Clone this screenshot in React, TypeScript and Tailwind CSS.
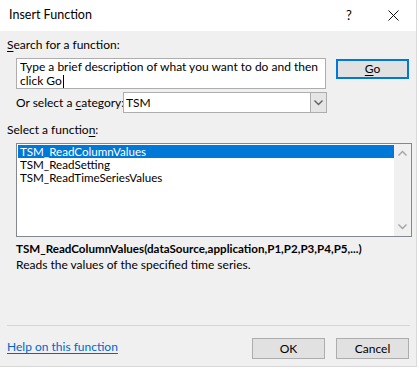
import React from 'react';

const font = { fontFamily: 'Lato, "Noto Sans", sans-serif' };

function Chevron({ up = false, className = '' }: { up?: boolean; className?: string }) {
  return (
    <svg width="9" height="6" viewBox="0 0 9 6" className={className}>
      <polyline
        points={up ? '0.5,5.5 4.5,1.5 8.5,5.5' : '0.5,0.5 4.5,4.5 8.5,0.5'}
        fill="none"
        stroke="currentColor"
        strokeWidth="1.4"
      />
    </svg>
  );
}

export default function App() {
  const functions = ['TSM_ReadColumnValues', 'TSM_ReadSetting', 'TSM_ReadTimeSeriesValues'];

  return (
    <div className="w-[419px] h-[369px] bg-white text-[12px] text-black" style={font}>
      <div className="w-[417px] h-[367px] flex flex-col bg-[#f0f0f0] border-r border-b border-[#d9d9d9]">
        {/* Title bar */}
        <div className="h-[31px] bg-white flex items-center pl-[9px] shrink-0">
          <span className="flex-1 text-[12.5px] leading-none">Insert Function</span>
          <span className="w-[12px] text-center mr-[33px] text-[13px] leading-none">?</span>
          <svg width="11" height="11" viewBox="0 0 11 11" className="mr-[17px]">
            <path d="M0.5 0.5 L10.5 10.5 M10.5 0.5 L0.5 10.5" stroke="#111" strokeWidth="1" />
          </svg>
        </div>

        <div className="flex-1 flex flex-col px-[7px]">
          <div className="mt-[6px] leading-[16px]">
            <span className="underline underline-offset-2">S</span>earch for a function:
          </div>

          <div className="flex mt-[5px] pl-[9px]">
            <div className="w-[311px] h-[31px] bg-white border border-[#adadad] px-[3px] pt-[1px] leading-[14px] whitespace-nowrap">
              Type a brief description of what you want to do and then
              <br />
              click Go<span className="inline-block w-px h-[13px] bg-black align-middle ml-px" />
            </div>
            <button className="ml-[10px] mt-[1px] w-[73px] h-[20px] bg-[#e1e1e1] border-2 border-[#0078d7] flex items-center justify-center leading-none">
              <span>
                <span className="underline underline-offset-2">G</span>o
              </span>
            </button>
          </div>

          <div className="flex items-center mt-[3px] pl-[9px]">
            <span className="w-[107px] leading-[16px] whitespace-nowrap">
              Or select a <span className="underline underline-offset-2">c</span>ategory:
            </span>
            <div className="w-[204px] h-[21px] bg-white border border-[#adadad] flex items-center">
              <span className="flex-1 pl-[2px]">TSM</span>
              <div className="w-[16px] h-full bg-[#e5e5e5] border-l border-[#adadad] flex items-center justify-center text-[#606060]">
                <Chevron />
              </div>
            </div>
          </div>

          <div className="mt-[9px] leading-[16px]">
            Select a functio<span className="underline underline-offset-2">n</span>:
          </div>

          <div className="ml-[9px] mt-[5px] w-[396px] h-[94px] bg-white border border-[#828790] flex">
            <div className="flex-1 pt-[1px] pl-[1px] text-[11.6px]">
              {functions.map((f, i) => (
                <div
                  key={f}
                  className={`h-[13px] leading-[13px] pl-[2px] ${i === 0 ? 'bg-[#0078d7] text-white' : ''}`}
                >
                  {f}
                </div>
              ))}
            </div>
            <div className="w-[17px] bg-[#f0f0f0] flex flex-col items-center justify-between py-[6px] text-[#a3a3a3]">
              <Chevron up />
              <Chevron />
            </div>
          </div>

          <div className="ml-[9px] mt-[4px] font-bold text-[11.6px] leading-[16px] whitespace-nowrap">
            TSM_ReadColumnValues(dataSource,application,P1,P2,P3,P4,P5,...)
          </div>
          <div className="ml-[9px] leading-[16px]">Reads the values of the specified time series.</div>

          <div className="flex-1" />
          <div className="h-px bg-[#d5d5d5] mr-[-1px]" />

          <div className="flex items-center mt-[12px] mb-[7px]">
            <a className="flex-1 text-[#0066cc] underline underline-offset-2 leading-[16px] -mt-[3px]" href="#">
              Help on this function
            </a>
            <button className="w-[73px] h-[21px] bg-[#e1e1e1] border border-[#adadad] leading-none">OK</button>
            <button className="ml-[11px] w-[73px] h-[21px] bg-[#e1e1e1] border border-[#adadad] leading-none">
              Cancel
            </button>
          </div>
        </div>
      </div>
    </div>
  );
}
